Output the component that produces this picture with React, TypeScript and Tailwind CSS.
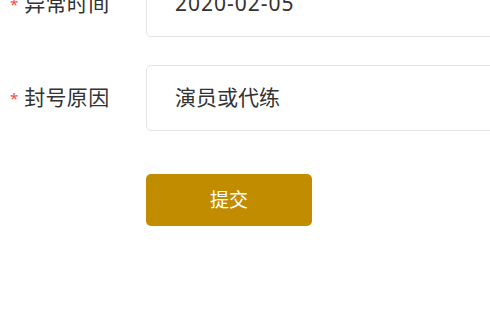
import React from 'react';

const font = { fontFamily: '"Noto Sans", "Noto Sans CJK SC", sans-serif' };

function Row({ label, value, wide }: { label: string; value: string; wide?: boolean }) {
  return (
    <div className="flex items-center h-[66px]">
      <div className="w-[146px] flex items-center pl-[10px] text-[21px] text-[#333]">
        <span className="text-[#f0474a] text-[15px] mr-[6px]">*</span>
        <span className="tracking-[0.3px]">{label}</span>
      </div>
      <div
        className={
          'flex-1 h-[66px] border border-[#e4e4e4] rounded-[5px] -mr-[40px] flex items-center pl-[28px] text-[21px] text-[#333] ' +
          (wide ? 'tracking-[1px]' : '')
        }
      >
        {value}
      </div>
    </div>
  );
}

export default function App() {
  return (
    <div className="w-[490px] h-[320px] overflow-hidden bg-white" style={font}>
      <div className="-mt-[29px] flex flex-col gap-[28px]">
        <Row label="异常时间" value="2020-02-05" wide />
        <Row label="封号原因" value="演员或代练" />
      </div>
      <div className="pl-[146px] mt-[43px]">
        <button className="w-[166px] h-[52px] rounded-[5px] bg-[#c28c00] text-white text-[19px]">
          提交
        </button>
      </div>
    </div>
  );
}
